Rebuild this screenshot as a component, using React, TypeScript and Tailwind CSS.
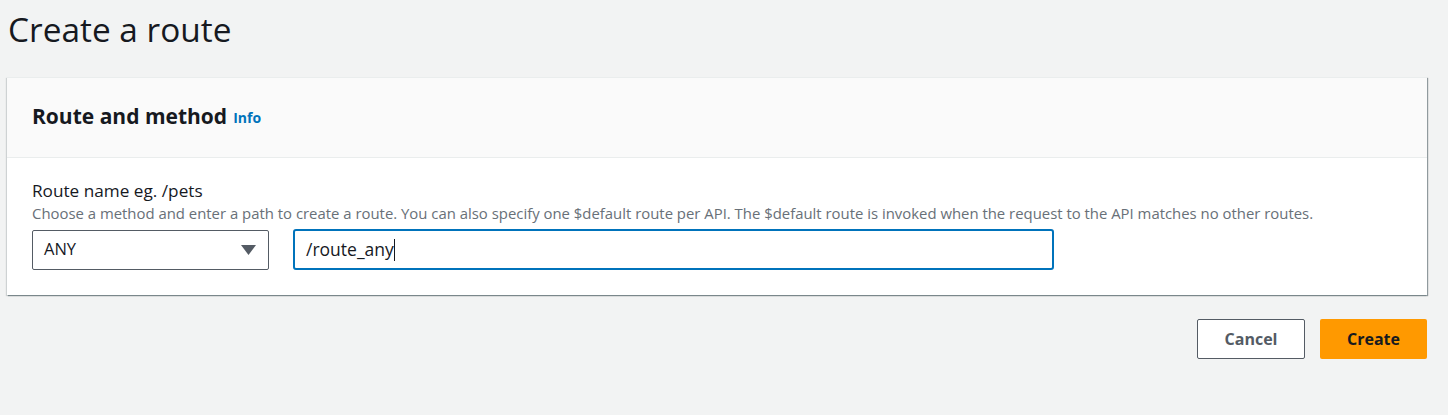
import React from "react";

export default function App() {
  return (
    <div className="min-h-[415px] w-[1448px] bg-[#f2f3f3] font-['Open_Sans',sans-serif] text-[#16191f]">
      <div className="pl-[8px] pr-[21px] pt-[7px]">
        <h1 className="text-[33.4px] leading-[44px] font-normal">Create a route</h1>
        <div className="mt-[26px] bg-white shadow-[1px_1px_1px_0_rgba(0,28,36,0.3),1px_1px_1px_0_rgba(0,28,36,0.15),-1px_1px_1px_0_rgba(0,28,36,0.15)] ml-[-1px] border-t border-[#eaeded]">
          <div className="h-[80px] bg-[#fafafa] border-b border-[#eaeded] px-[25px] flex items-center pb-[4px]">
            <h2 className="text-[21px] font-bold leading-[28px]">Route and method</h2>
            <a className="ml-[6px] mt-[3px] text-[14px] font-bold text-[#0073bb]">Info</a>
          </div>
          <div className="px-[25px] pt-[21px] pb-[25px]">
            <div className="text-[17.2px] leading-[24px]">Route name eg. /pets</div>
            <div className="text-[14.9px] leading-[20px] text-[#687078]">
              Choose a method and enter a path to create a route. You can also specify one $default route per API. The $default route is invoked when the request to the API matches no other routes.
            </div>
            <div className="mt-[6px] flex items-center gap-[24px]">
              <div className="w-[237px] h-[40px] border border-[#545b64] rounded-[2px] flex items-center justify-between pl-[11px] pr-[12px]">
                <span className="text-[16.5px]">ANY</span>
                <svg width="15" height="10" viewBox="0 0 15 10">
                  <polygon points="0,0 15,0 7.5,10" fill="#545b64" />
                </svg>
              </div>
              <div className="w-[761px] h-[41px] border-2 border-[#0073bb] rounded-[3px] flex items-center pl-[11px]">
                <span className="text-[17.5px]">/route_any</span>
                <span className="w-[1px] h-[22px] bg-[#16191f]" />
              </div>
            </div>
          </div>
        </div>
        <div className="mt-[24px] flex justify-end gap-[15px] pr-0">
          <button className="w-[108px] h-[40px] border border-[#545b64] rounded-[2px] bg-white text-[16px] font-bold text-[#545b64]">
            Cancel
          </button>
          <button className="w-[107px] h-[40px] rounded-[2px] bg-[#ff9900] text-[16px] font-bold text-[#16191f]">
            Create
          </button>
        </div>
      </div>
    </div>
  );
}
